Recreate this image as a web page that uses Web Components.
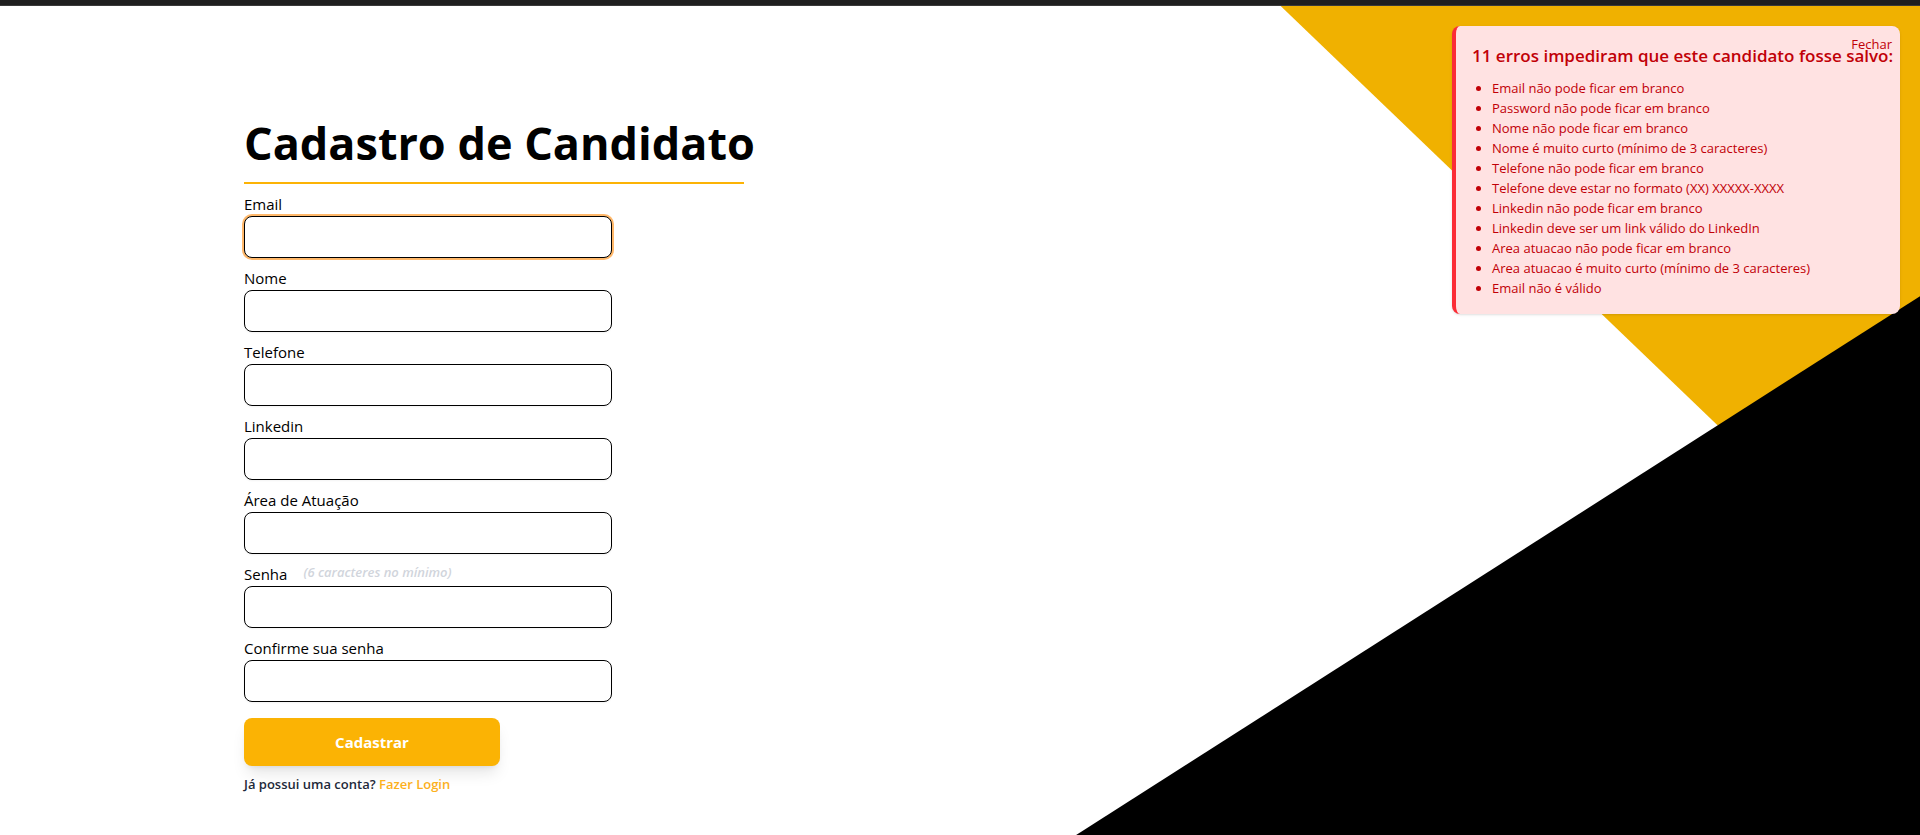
<!DOCTYPE html>
<html lang="pt-BR">
<head>
<meta charset="utf-8">
<meta name="viewport" content="width=device-width, initial-scale=1">
<title>Cadastro de Candidato</title>
<style>
  body { margin: 0; background: #fff; color: #000; font: 15px/24px "Segoe UI", "Open Sans", "Noto Sans", sans-serif; }
</style>
</head>
<body>
<signup-page>
  <signup-form heading="Cadastro de Candidato">
    <text-field label="Email" type="email" name="email" highlighted></text-field>
    <text-field label="Nome" name="nome"></text-field>
    <text-field label="Telefone" type="tel" name="telefone"></text-field>
    <text-field label="Linkedin" type="url" name="linkedin"></text-field>
    <text-field label="Área de Atuação" name="area"></text-field>
    <text-field label="Senha" type="password" name="senha" hint="(6 caracteres no mínimo)"></text-field>
    <text-field label="Confirme sua senha" type="password" name="confirmacao"></text-field>
  </signup-form>
  <error-alert slot="alert">
    <span slot="title">11 erros impediram que este candidato fosse salvo:</span>
    <error-list></error-list>
  </error-alert>
</signup-page>

<script>
const define = (name, html, setup) => {
  const template = document.createElement('template');
  template.innerHTML = html;
  customElements.define(name, class extends HTMLElement {
    connectedCallback() {
      if (this.shadowRoot) return;
      const root = this.attachShadow({ mode: 'open' });
      root.append(template.content.cloneNode(true));
      if (setup) setup(this, root);
    }
  });
};

define('signup-page', `
  <style>
    :host { display: flex; flex-direction: column; min-height: 100vh; }
    header { height: 5px; background: #1f1f1f; border-bottom: 1px solid #3a3a3a; }
    .stage { flex: 1; position: relative; overflow: hidden; }
    .gold, .dark { position: absolute; inset: 0; }
    .gold { background: #f0b100; clip-path: polygon(66.7% 0, 100% 0, 100% 74%); }
    .dark { background: #000; clip-path: polygon(100% 35%, 100% 100%, 56.05% 100%); }
    main { position: relative; max-width: 1432px; margin: 0 auto; padding: 112px 24px 40px; box-sizing: border-box; }
    @media (min-width: 1480px) { main { padding-left: 0; padding-right: 0; } }
    aside { position: absolute; top: 20px; right: 20px; }
  </style>
  <header></header>
  <div class="stage">
    <div class="gold"></div>
    <div class="dark"></div>
    <main><slot></slot></main>
    <aside><slot name="alert"></slot></aside>
  </div>`);

define('signup-form', `
  <style>
    :host { display: block; max-width: 500px; }
    h1 { margin: 0 0 8px; padding-bottom: 14px; border-bottom: 2px solid #fcb305;
         font-size: 45px; line-height: 50px; font-weight: 700; white-space: nowrap; }
    form { display: flex; flex-direction: column; gap: 16px; align-items: flex-start; }
    .fields { display: flex; flex-direction: column; gap: 8px; width: 100%; max-width: 368px; }
    button { width: 256px; height: 48px; border: 0; border-radius: 8px; background: #fbb304; color: #fff;
             font: inherit; font-weight: 700; cursor: pointer;
             box-shadow: 0 10px 15px -3px rgb(0 0 0 / .1), 0 4px 6px -4px rgb(0 0 0 / .1); }
    p { margin: 8px 0 0; font-size: 13px; line-height: 20px; font-weight: 600; color: #1e2939; }
    a { color: #fcb01c; text-decoration: none; }
  </style>
  <h1></h1>
  <form>
    <div class="fields"><slot></slot></div>
    <button type="submit">Cadastrar</button>
  </form>
  <p>Já possui uma conta? <a href="#login">Fazer Login</a></p>`,
  (host, root) => { root.querySelector('h1').textContent = host.getAttribute('heading'); });

define('text-field', `
  <style>
    :host { display: block; }
    .top { display: flex; gap: 16px; }
    .hint { font-size: 13px; line-height: 20px; font-style: italic; font-weight: 600; color: #d1d5dc; }
    .hint:empty { display: none; }
    input { display: block; width: 100%; height: 42px; box-sizing: border-box; padding: 8px 12px;
            border: 1px solid #000; border-radius: 8px; background: #fff; font: inherit; outline: none;
            box-shadow: 0 1px 2px rgb(0 0 0 / .05); }
    input:focus, :host([highlighted]) input { box-shadow: 0 0 0 2px #ffb86a; }
  </style>
  <div class="top"><label for="field"></label><span class="hint" id="hint"></span></div>
  <input id="field" aria-describedby="hint">`,
  (host, root) => {
    root.querySelector('label').textContent = host.getAttribute('label');
    root.querySelector('.hint').textContent = host.getAttribute('hint') || '';
    const input = root.querySelector('input');
    input.type = host.getAttribute('type') || 'text';
    input.name = host.getAttribute('name');
  });

define('error-alert', `
  <style>
    :host { display: block; position: relative; width: 448px; max-width: calc(100vw - 40px); box-sizing: border-box;
            padding: 16px; border-left: 4px solid #fb2c36; border-radius: 8px; background: #ffe2e2; color: #c10007;
            font-size: 13px; line-height: 20px;
            box-shadow: 0 1px 3px rgb(0 0 0 / .1), 0 1px 2px -1px rgb(0 0 0 / .1); }
    h2 { margin: 0 0 8px; font-size: 17px; line-height: 28px; font-weight: 600; white-space: nowrap; }
    button { position: absolute; top: 8px; right: 8px; padding: 0; border: 0; background: none;
             color: inherit; font: inherit; cursor: pointer; }
  </style>
  <h2><slot name="title"></slot></h2>
  <slot></slot>
  <button type="button">Fechar</button>`,
  (host, root) => { root.querySelector('button').addEventListener('click', () => host.remove()); });

define('error-list', `
  <style>
    :host { display: block; }
    ul { margin: 0; padding-left: 20px; list-style: disc; }
  </style>
  <ul>
    <li>Email não pode ficar em branco</li>
    <li>Password não pode ficar em branco</li>
    <li>Nome não pode ficar em branco</li>
    <li>Nome é muito curto (mínimo de 3 caracteres)</li>
    <li>Telefone não pode ficar em branco</li>
    <li>Telefone deve estar no formato (XX) XXXXX-XXXX</li>
    <li>Linkedin não pode ficar em branco</li>
    <li>Linkedin deve ser um link válido do LinkedIn</li>
    <li>Area atuacao não pode ficar em branco</li>
    <li>Area atuacao é muito curto (mínimo de 3 caracteres)</li>
    <li>Email não é válido</li>
  </ul>`);
</script>
</body>
</html>
